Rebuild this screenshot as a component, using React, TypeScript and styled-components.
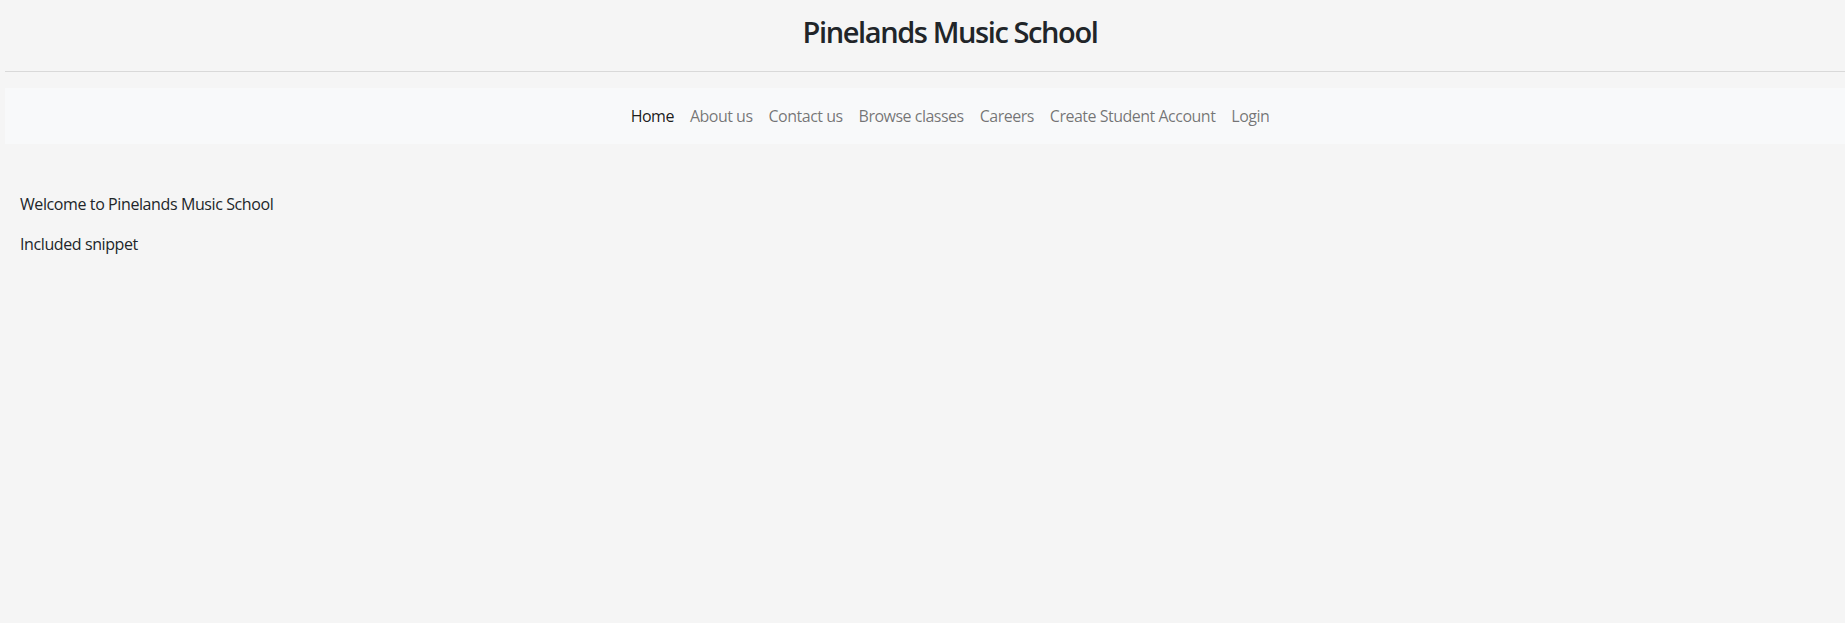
import styled, { createGlobalStyle } from "styled-components";

const GlobalStyle = createGlobalStyle`
  html, body {
    margin: 0;
    background: #f5f5f5;
  }
  body {
    margin-left: 5px;
    font-family: "Segoe UI", "Open Sans", "Liberation Sans", sans-serif;
    font-size: 16px;
    line-height: 1.5;
    letter-spacing: -0.4px;
    color: #212529;
    overflow: hidden;
  }
`;

const CENTER_SHIFT = "50px";

const Header = styled.header`
  padding: 15px 0 0 ${CENTER_SHIFT};
  text-align: center;
`;

const Title = styled.h2`
  margin: 0 0 21px;
  font-size: 29px;
  font-weight: 600;
  line-height: 1.2;
  letter-spacing: -1.4px;
  color: #212529;
`;

const Divider = styled.hr`
  margin: 0 0 16px;
  border: 0;
  border-top: 1px solid #d9d9d9;
`;

const Navbar = styled.nav`
  height: 56px;
  background: #f8f9fa;
  display: flex;
  align-items: center;
  justify-content: center;
  padding-left: ${CENTER_SHIFT};
`;

const NavList = styled.ul`
  display: flex;
  margin: 0;
  padding: 0;
  list-style: none;
`;

const NavLink = styled.a<{ $active?: boolean }>`
  display: block;
  padding: 8px;
  letter-spacing: -0.5px;
  text-decoration: none;
  color: ${({ $active }) => ($active ? "rgba(0, 0, 0, 0.9)" : "rgba(0, 0, 0, 0.55)")};
`;

const Main = styled.main`
  padding: 32px 15px 0;
`;

const Para = styled.p`
  margin: 16px 0 0;
`;

const links = [
  "Home",
  "About us",
  "Contact us",
  "Browse classes",
  "Careers",
  "Create Student Account",
  "Login",
];

export default function App() {
  return (
    <>
      <GlobalStyle />
      <Header>
        <Title>Pinelands Music School</Title>
      </Header>
      <Divider />
      <Navbar>
        <NavList>
          {links.map((l, i) => (
            <li key={l}>
              <NavLink href="#" $active={i === 0}>
                {l}
              </NavLink>
            </li>
          ))}
        </NavList>
      </Navbar>
      <Main>
        <Para>Welcome to Pinelands Music School</Para>
        <Para>Included snippet</Para>
      </Main>
    </>
  );
}
